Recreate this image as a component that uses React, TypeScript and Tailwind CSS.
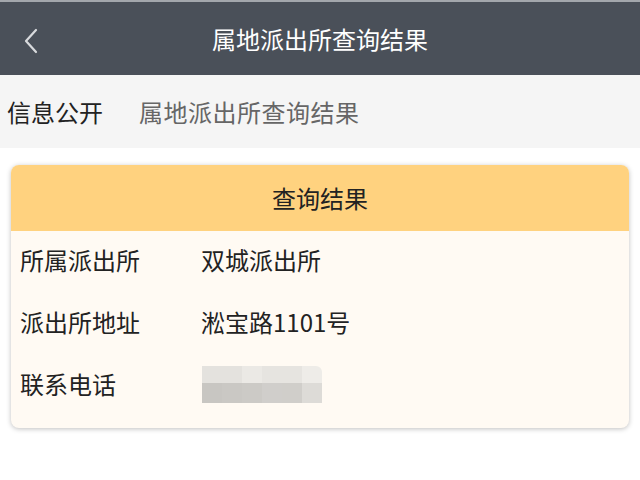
import React from 'react';

const font = { fontFamily: '"Noto Sans CJK SC", "Noto Sans", sans-serif' };

const rows = [
  { label: '所属派出所', value: '双城派出所' },
  { label: '派出所地址', value: '淞宝路1101号' },
];

// mosaic that hides the phone number
const mosaicTop = ['#e4e2de', '#e4e2de', '#ebe9e5', '#e6e4e0', '#e6e4e0', '#eeece8'];
const mosaicBottom = ['#c8c6c2', '#cac8c4', '#cccac6', '#d0cecb', '#d0ceca', '#dddbd7'];

export default function App() {
  return (
    <div className="w-[640px] h-[480px] bg-white overflow-hidden" style={font}>
      <div className="h-[2px] bg-[#a3a7ac]" />
      <header className="relative h-[73px] bg-[#4a5059] flex items-center justify-center">
        <button className="absolute left-[22px] top-[24px] p-0">
          <svg width="18" height="30" viewBox="0 0 18 30" fill="none">
            <path d="M14 4 L4 15 L14 26" stroke="#d8dadd" strokeWidth="2.2" strokeLinecap="round" strokeLinejoin="round" />
          </svg>
        </button>
        <h1 className="text-[24px] text-white leading-none">属地派出所查询结果</h1>
      </header>

      <nav className="h-[73px] bg-[#f5f5f5] flex items-center pl-[7px] text-[24px] leading-none">
        <span className="text-[#222]">信息公开</span>
        <span className="ml-[36px] text-[#666] tracking-[0.5px]">属地派出所查询结果</span>
      </nav>

      <div className="px-[11px] pt-[17px]">
        <div className="rounded-[8px] overflow-hidden bg-[#fffaf3] shadow-[0_1px_5px_rgba(0,0,0,0.25)]">
          <div className="h-[66px] bg-[#ffd27f] flex items-center justify-center text-[24px] text-[#222]">
            查询结果
          </div>
          <div className="pb-[11px]">
            {rows.map((r) => (
              <div key={r.label} className="h-[62px] pb-[4px] flex items-center text-[24px] text-[#222]">
                <span className="w-[190px] pl-[9px]">{r.label}</span>
                <span>{r.value}</span>
              </div>
            ))}
            <div className="h-[62px] pb-[4px] flex items-center text-[24px] text-[#222]">
              <span className="w-[191px] pl-[9px]">联系电话</span>
              <div className="flex flex-col rounded-tr-[6px] overflow-hidden">
                <div className="flex">
                  {mosaicTop.map((c, i) => (
                    <div key={i} className="w-[20px] h-[17px]" style={{ background: c }} />
                  ))}
                </div>
                <div className="flex">
                  {mosaicBottom.map((c, i) => (
                    <div key={i} className="w-[20px] h-[20px]" style={{ background: c }} />
                  ))}
                </div>
              </div>
            </div>
          </div>
        </div>
      </div>
    </div>
  );
}
